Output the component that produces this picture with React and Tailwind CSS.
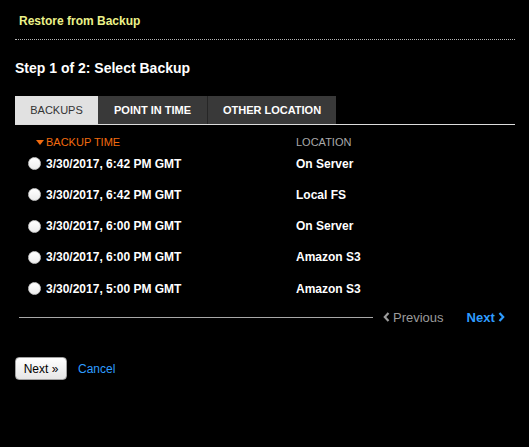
import React from "react";

const rows = [
  { time: "3/30/2017, 6:42 PM GMT", location: "On Server" },
  { time: "3/30/2017, 6:42 PM GMT", location: "Local FS" },
  { time: "3/30/2017, 6:00 PM GMT", location: "On Server" },
  { time: "3/30/2017, 6:00 PM GMT", location: "Amazon S3" },
  { time: "3/30/2017, 5:00 PM GMT", location: "Amazon S3" },
];

function Chevron({ left, className }) {
  return (
    <svg width="7" height="10" viewBox="0 0 7 10" className={className}>
      <path
        d={left ? "M5.5 1 L1.8 5 L5.5 9" : "M1.5 1 L5.2 5 L1.5 9"}
        fill="none"
        stroke="currentColor"
        strokeWidth="2.2"
      />
    </svg>
  );
}

export default function App() {
  return (
    <div
      className="min-h-[447px] w-[529px] bg-black text-white"
      style={{ fontFamily: '"Liberation Sans", Arial, sans-serif' }}
    >
      <div className="ml-[15px] w-[500px]">
        <div className="border-b border-dotted border-[#b5b5b5] pt-[14px] pb-[11px] pl-[4px] text-[12px] leading-[14px] font-bold text-[#ecf28a]">
          Restore from Backup
        </div>

        <h2 className="mt-[20px] text-[14px] leading-[16px] font-bold">
          Step 1 of 2: Select Backup
        </h2>

        <div className="mt-[20px] flex border-b border-[#dcdcdc]">
          <div className="flex h-[28px] w-[83px] items-center justify-center bg-[#e1e1e1] text-[11px] text-[#333]">
            BACKUPS
          </div>
          <div className="flex h-[28px] w-[110px] items-center justify-center border-r border-[#262626] bg-[#393939] text-[11px] font-bold">
            POINT IN TIME
          </div>
          <div className="flex h-[28px] w-[128px] items-center justify-center bg-[#393939] text-[11px] font-bold">
            OTHER LOCATION
          </div>
        </div>

        <div className="mt-[11px] flex h-[12px] items-center text-[11px] leading-[12px]">
          <div className="flex w-[281px] items-center pl-[21px] text-[#f26b0f]">
            <svg width="8" height="5" viewBox="0 0 8 5" className="mr-[2px]">
              <path d="M0 0 H8 L4 5 Z" fill="currentColor" />
            </svg>
            BACKUP TIME
          </div>
          <div className="text-[#a9a9a9]">LOCATION</div>
        </div>

        <div>
          {rows.map((r, i) => (
            <div key={i} className="flex h-[31.25px] items-center text-[12px] font-bold">
              <div className="flex w-[281px] items-center pl-[13px]">
                <span className="mr-[5px] h-[13px] w-[13px] shrink-0 rounded-full border border-[#c8c8c8] bg-gradient-to-b from-white to-[#ededed]" />
                {r.time}
              </div>
              <div>{r.location}</div>
            </div>
          ))}
        </div>

        <div className="flex h-[26px] items-center text-[13px]">
          <div className="ml-[4px] h-px w-[354px] bg-[#a8a8a8]" />
          <div className="ml-[10px] flex items-center gap-[3px] text-[#9b9b9b]">
            <Chevron left />
            Previous
          </div>
          <div className="ml-[23px] flex items-center gap-[3px] font-bold text-[#2e9cff]">
            Next
            <Chevron />
          </div>
        </div>

        <div className="mt-[27px] flex items-center">
          <button className="h-[23px] w-[52px] rounded-[4px] border border-[#a0a0a0] bg-gradient-to-b from-white to-[#e6e6e6] text-[12px] text-black">
            Next »
          </button>
          <span className="ml-[11px] text-[12px] text-[#2e9cff]">Cancel</span>
        </div>
      </div>
    </div>
  );
}
